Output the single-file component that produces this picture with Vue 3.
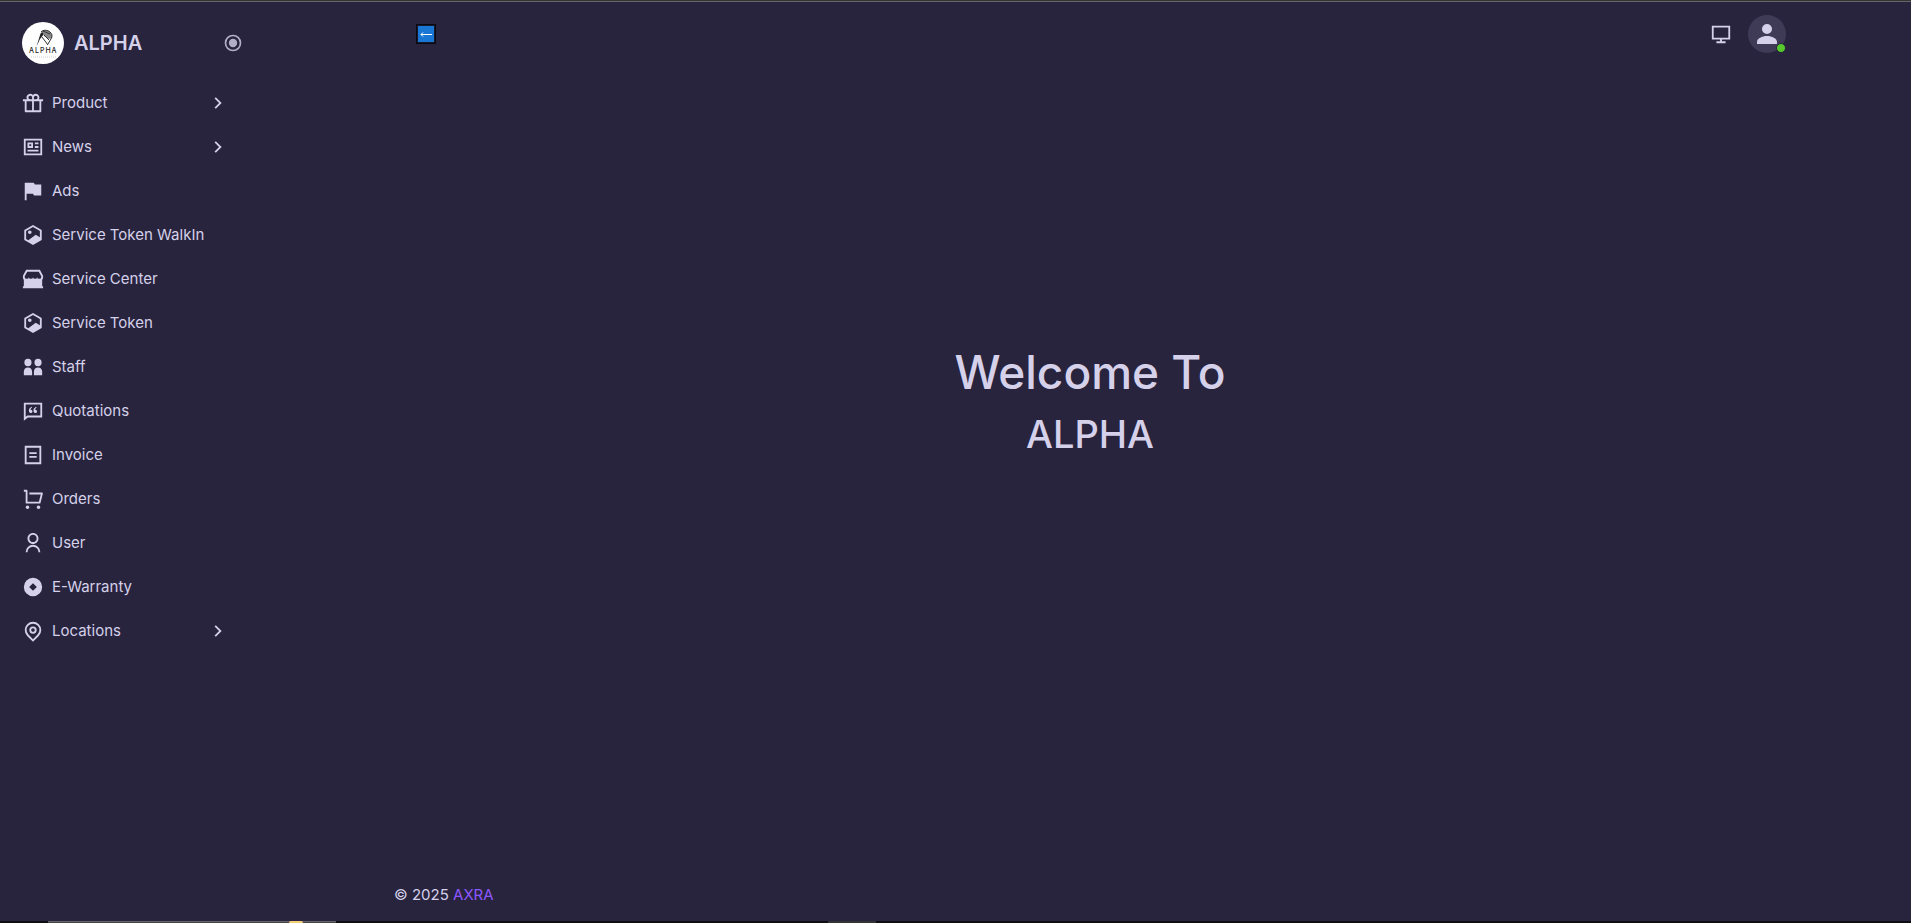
<script setup>
const icons = {
  gift: 'M15 2a4 4 0 0 1 3.464 6H23v2h-2v11a1 1 0 0 1-1 1H4a1 1 0 0 1-1-1V10H1V8h4.536A4 4 0 0 1 12 3.355 3.98 3.98 0 0 1 15 2zM11 10H5v10h6V10zm8 0h-6v10h6V10zM9 4a2 2 0 0 0-.15 3.995L9 8h2V6a2 2 0 0 0-1.697-1.977l-.154-.018L9 4zm6 0a2 2 0 0 0-1.995 1.85L13 6v2h2a2 2 0 0 0 1.995-1.85L17 6a2 2 0 0 0-2-2z',
  news: 'M2 3h20v18H2V3zm2 2v14h16V5H4zm2 2h6v6H6V7zm2 2v2h2V9H8zm-2 6h12v2H6v-2zm8-8h4v2h-4V7zm0 4h4v2h-4v-2z',
  flag: 'M3 3h9.382a1 1 0 0 1 .894.553L14 5h7v12h-7.382a1 1 0 0 1-.894-.553L12 15H5v7H3V3z',
  token: 'M12 1l9.5 5.5v11L12 23l-9.5-5.5v-11L12 1zm0 2.311L4.5 7.653v8.694l2.372 1.373 8.073-5.92 4.555 2.734V7.653L12 3.311zM8.5 11a2 2 0 1 1 0-4 2 2 0 0 1 0 4z',
  store: 'M22 13v7h1v2H1v-2h1v-7l-1-2V8.500L4.500 2h15L23 8.500V11l-1 2zM5.700 4L3 9v1a2.250 1.800 0 0 0 4.500 0 2.250 1.800 0 0 0 4.500 0 2.250 1.800 0 0 0 4.500 0 2.250 1.800 0 0 0 4.500 0V9l-2.700-5H5.700z',
  staff: 'M6.500 3a3.900 4.100 0 1 1 0 8.200 3.900 4.100 0 0 1 0-8.200zm11 0a3.900 4.100 0 1 1 0 8.200 3.900 4.100 0 0 1 0-8.200zM2 21v-4c0-2.800 2-4.500 4.500-4.500S11 14.200 11 17v4H2zm11 0v-4c0-2.800 2-4.500 4.500-4.500S22 14.200 22 17v4h-9z',
  quote: 'M2 3h20v16H6.455L2 22.5V3zm2 2v13.385L5.763 17H20V5H4zm6.515 2.412l.447.688c-1.668.903-1.639 2.352-1.639 2.664.155-.02.318-.024.48-.009a1.76 1.76 0 0 1 1.613 1.745 1.75 1.75 0 0 1-1.75 1.75c-.537 0-1.05-.245-1.374-.59-.515-.546-.792-1.16-.792-2.155 0-1.75 1.228-3.318 3.015-4.093zm5 0l.447.688c-1.668.903-1.639 2.352-1.639 2.664.155-.02.318-.024.48-.009a1.76 1.76 0 0 1 1.613 1.745 1.75 1.75 0 0 1-1.75 1.75c-.537 0-1.05-.245-1.374-.59-.515-.546-.792-1.16-.792-2.155 0-1.75 1.228-3.318 3.015-4.093z',
  bill: 'M3 2h18v20H3V2zm2 2v16h14V4H5zm3 5h8v2H8V9zm0 4h8v2H8v-2z',
  cart: 'M4 16V4H2V2h3a1 1 0 0 1 1 1v12h12.438l2-8H8V5h13.72a1 1 0 0 1 .97 1.243l-2.5 10a1 1 0 0 1-.97.757H5a1 1 0 0 1-1-1zm2 7a2 2 0 1 1 0-4 2 2 0 0 1 0 4zm12 0a2 2 0 1 1 0-4 2 2 0 0 1 0 4z',
  user: 'M4 22a8 8 0 1 1 16 0h-2a6 6 0 1 0-12 0H4zm8-9c-3.315 0-6-2.685-6-6s2.685-6 6-6 6 2.685 6 6-2.685 6-6 6zm0-2c2.21 0 4-1.79 4-4s-1.79-4-4-4-4 1.79-4 4 1.79 4 4 4z',
  coin: 'M12 2a10 10 0 1 1 0 20 10 10 0 0 1 0-20zm0 5.800L7.800 12l4.200 4.200 4.200-4.200L12 7.800z',
  pin: 'M12 23.728l-6.364-6.364a9 9 0 1 1 12.728 0L12 23.728zm4.95-7.778a7 7 0 1 0-9.9 0L12 20.9l4.95-4.95zM12 15a4 4 0 1 1 0-8 4 4 0 0 1 0 8zm0-2a2 2 0 1 0 0-4 2 2 0 0 0 0 4z',
}

const items = [
  { label: 'Product', icon: 'gift', group: true },
  { label: 'News', icon: 'news', group: true },
  { label: 'Ads', icon: 'flag' },
  { label: 'Service Token WalkIn', icon: 'token' },
  { label: 'Service Center', icon: 'store' },
  { label: 'Service Token', icon: 'token' },
  { label: 'Staff', icon: 'staff' },
  { label: 'Quotations', icon: 'quote' },
  { label: 'Invoice', icon: 'bill' },
  { label: 'Orders', icon: 'cart' },
  { label: 'User', icon: 'user' },
  { label: 'E-Warranty', icon: 'coin' },
  { label: 'Locations', icon: 'pin', group: true },
]
</script>

<template>
  <div class="layout">
    <aside class="sidebar">
      <div class="brand">
        <a class="brand-link" href="#">
          <span class="logo">
            <svg viewBox="0 0 42 42" aria-hidden="true">
              <path d="M14.500 24.500l4-13 2.500-2.500 1 3-4 5z" fill="#222" />
              <path d="M19 10c2-2.500 7-2 9 0 2 1.500 2.500 4 1.500 6l-2.500 1-5-3-1-3z" fill="#888" />
              <path d="M19 10c2-2.500 7-2 9 0 2 1.500 2.500 4 1.500 6L26 22M20 15l6 8M22 13l5 5M21 9l7 3" fill="none" stroke="#333" />
              <path d="M9 35h25" stroke="#ccc" stroke-dasharray="1 1" />
            </svg>
            <span class="logo-word">ALPHA</span>
          </span>
          <span class="brand-name">ALPHA</span>
        </a>
        <button class="pin-button" type="button" aria-label="Pin menu">
          <svg class="icon small" viewBox="0 0 24 24">
            <path d="M12 22a10 10 0 1 1 0-20 10 10 0 0 1 0 20zm0-2a8 8 0 1 0 0-16 8 8 0 0 0 0 16zm0-3a5 5 0 1 1 0-10 5 5 0 0 1 0 10z" />
          </svg>
        </button>
      </div>
      <nav>
        <ul class="menu">
          <li v-for="item in items" :key="item.label">
            <a class="menu-link" href="#">
              <svg class="icon" viewBox="0 0 24 24" aria-hidden="true"><path fill-rule="evenodd" :d="icons[item.icon]" /></svg>
              <span class="menu-label">{{ item.label }}</span>
              <svg v-if="item.group" class="icon" viewBox="0 0 24 24" aria-hidden="true">
                <path d="M13.172 12l-4.950-4.950 1.414-1.414L16 12l-6.364 6.364-1.414-1.414z" />
              </svg>
            </a>
          </li>
        </ul>
      </nav>
    </aside>

    <div class="content">
      <header class="topbar">
        <button class="back" type="button" aria-label="Back">
          <svg viewBox="0 0 16 16"><path d="M3 8.500h11M3 8.500l2-2M3 8.500l2 2" /></svg>
        </button>
        <div class="tools">
          <button class="tool" type="button" aria-label="Theme">
            <svg class="icon" viewBox="0 0 24 24">
              <path d="M4 16h16V5H4v11zm9 2v2h4v2H7v-2h4v-2H2V3h20v15h-9z" />
            </svg>
          </button>
          <button class="avatar" type="button" aria-label="Account">
            <svg viewBox="0 0 24 24"><path d="M12 2a5 5 0 1 1 0 10 5 5 0 0 1 0-10zM2 22v-2c0-3.500 5-6 10-6s10 2.500 10 6v2z" /></svg>
            <span class="status"></span>
          </button>
        </div>
      </header>
      <main class="welcome">
        <h1>Welcome To</h1>
        <h2>ALPHA</h2>
      </main>
      <footer class="footer">© 2025 <a href="#">AXRA</a></footer>
    </div>

    <div class="edge" aria-hidden="true">
      <span class="window"><span class="dot"></span></span>
      <span class="handle"></span>
    </div>
  </div>
</template>

<style>
body {
  margin: 0;
  background: #28243d;
}
</style>

<style scoped>
.layout {
  box-sizing: border-box;
  min-height: 100vh;
  display: grid;
  grid-template-columns: 269px 1fr;
  grid-template-rows: 1fr 2px;
  border-top: 1px solid #333;
  box-shadow: inset 0 1px #66646b;
  background: #28243d;
  color: #d5d1ea;
  font: 400 15px/22px Inter, "Liberation Sans", sans-serif;
}
button {
  padding: 0;
  border: 0;
  background: none;
  color: inherit;
}
a {
  color: inherit;
  text-decoration: none;
}
svg {
  display: block;
}
.icon {
  width: 22px;
  height: 22px;
  flex: none;
  fill: currentColor;
}
.icon.small {
  width: 20px;
  height: 20px;
}
.sidebar {
  padding: 21px 26px 0 22px;
}
.brand {
  display: flex;
  align-items: center;
  justify-content: space-between;
  margin-bottom: 17px;
}
.pin-button {
  opacity: 0.8;
}
.brand-link {
  display: flex;
  align-items: center;
  gap: 10px;
}
.logo {
  position: relative;
  width: 42px;
  height: 42px;
  border-radius: 50%;
  background: #fff;
}
.logo-word {
  position: absolute;
  top: 25px;
  left: 7px;
  color: #222;
  font-size: 7px;
  font-weight: 500;
  line-height: 8px;
  letter-spacing: 1px;
}
.brand-name {
  font-size: 20px;
  font-weight: 600;
  line-height: 24px;
}
.menu {
  margin: 0;
  padding: 0;
  list-style: none;
}
.menu-link {
  display: flex;
  align-items: center;
  gap: 8px;
  height: 44px;
  padding-right: 14px;
}
.menu-label {
  flex: 1;
  white-space: nowrap;
}
.content {
  box-sizing: border-box;
  width: 100%;
  max-width: 1440px;
  margin: 0 auto;
  padding: 0 24px;
  display: flex;
  flex-direction: column;
}
.topbar {
  display: flex;
  align-items: center;
  justify-content: space-between;
  height: 66px;
  padding-left: 22px;
}
.back {
  box-sizing: border-box;
  width: 20px;
  height: 20px;
  border: 1px solid #080a12;
  outline: 1px solid #17182a;
  outline-offset: -2px;
  background: #1976d2;
}
.back svg {
  width: 16px;
  height: 16px;
  margin: auto;
  fill: none;
  stroke: #fff;
}
.tools {
  display: flex;
  align-items: center;
  gap: 16px;
}
.avatar {
  position: relative;
  width: 38px;
  height: 38px;
  border-radius: 50%;
  background: #3f3b57;
}
.avatar svg {
  width: 24px;
  height: 24px;
  margin: auto;
  fill: currentColor;
}
.status {
  position: absolute;
  right: 0;
  bottom: 0;
  width: 8px;
  height: 8px;
  border: 1px solid #28243d;
  border-radius: 50%;
  background: #56ca2c;
}
.welcome {
  flex: 1;
  display: flex;
  flex-direction: column;
  align-items: center;
  padding-top: 269px;
}
h1,
h2 {
  margin: 0;
  font-weight: 500;
}
h1 {
  font-size: 46px;
  line-height: 72px;
}
h2 {
  font-size: 38px;
  line-height: 52px;
}
.footer {
  padding: 16px 0 15px;
}
.footer a {
  color: #8c57ff;
}
.edge {
  grid-column: 1 / -1;
  display: grid;
  grid-template-columns: 48px 288px 492px 48px;
  background: #100e13;
}
.window {
  grid-column: 2;
  display: flex;
  justify-content: flex-end;
  padding-right: 33px;
  border-top: 1px solid #67656a;
  background: #444;
}
.dot {
  width: 14px;
  height: 2px;
  margin-top: -1px;
  border-radius: 6px 6px 0 0;
  background: #f5cf7a;
}
.handle {
  grid-column: 4;
  background: #333;
}
</style>
